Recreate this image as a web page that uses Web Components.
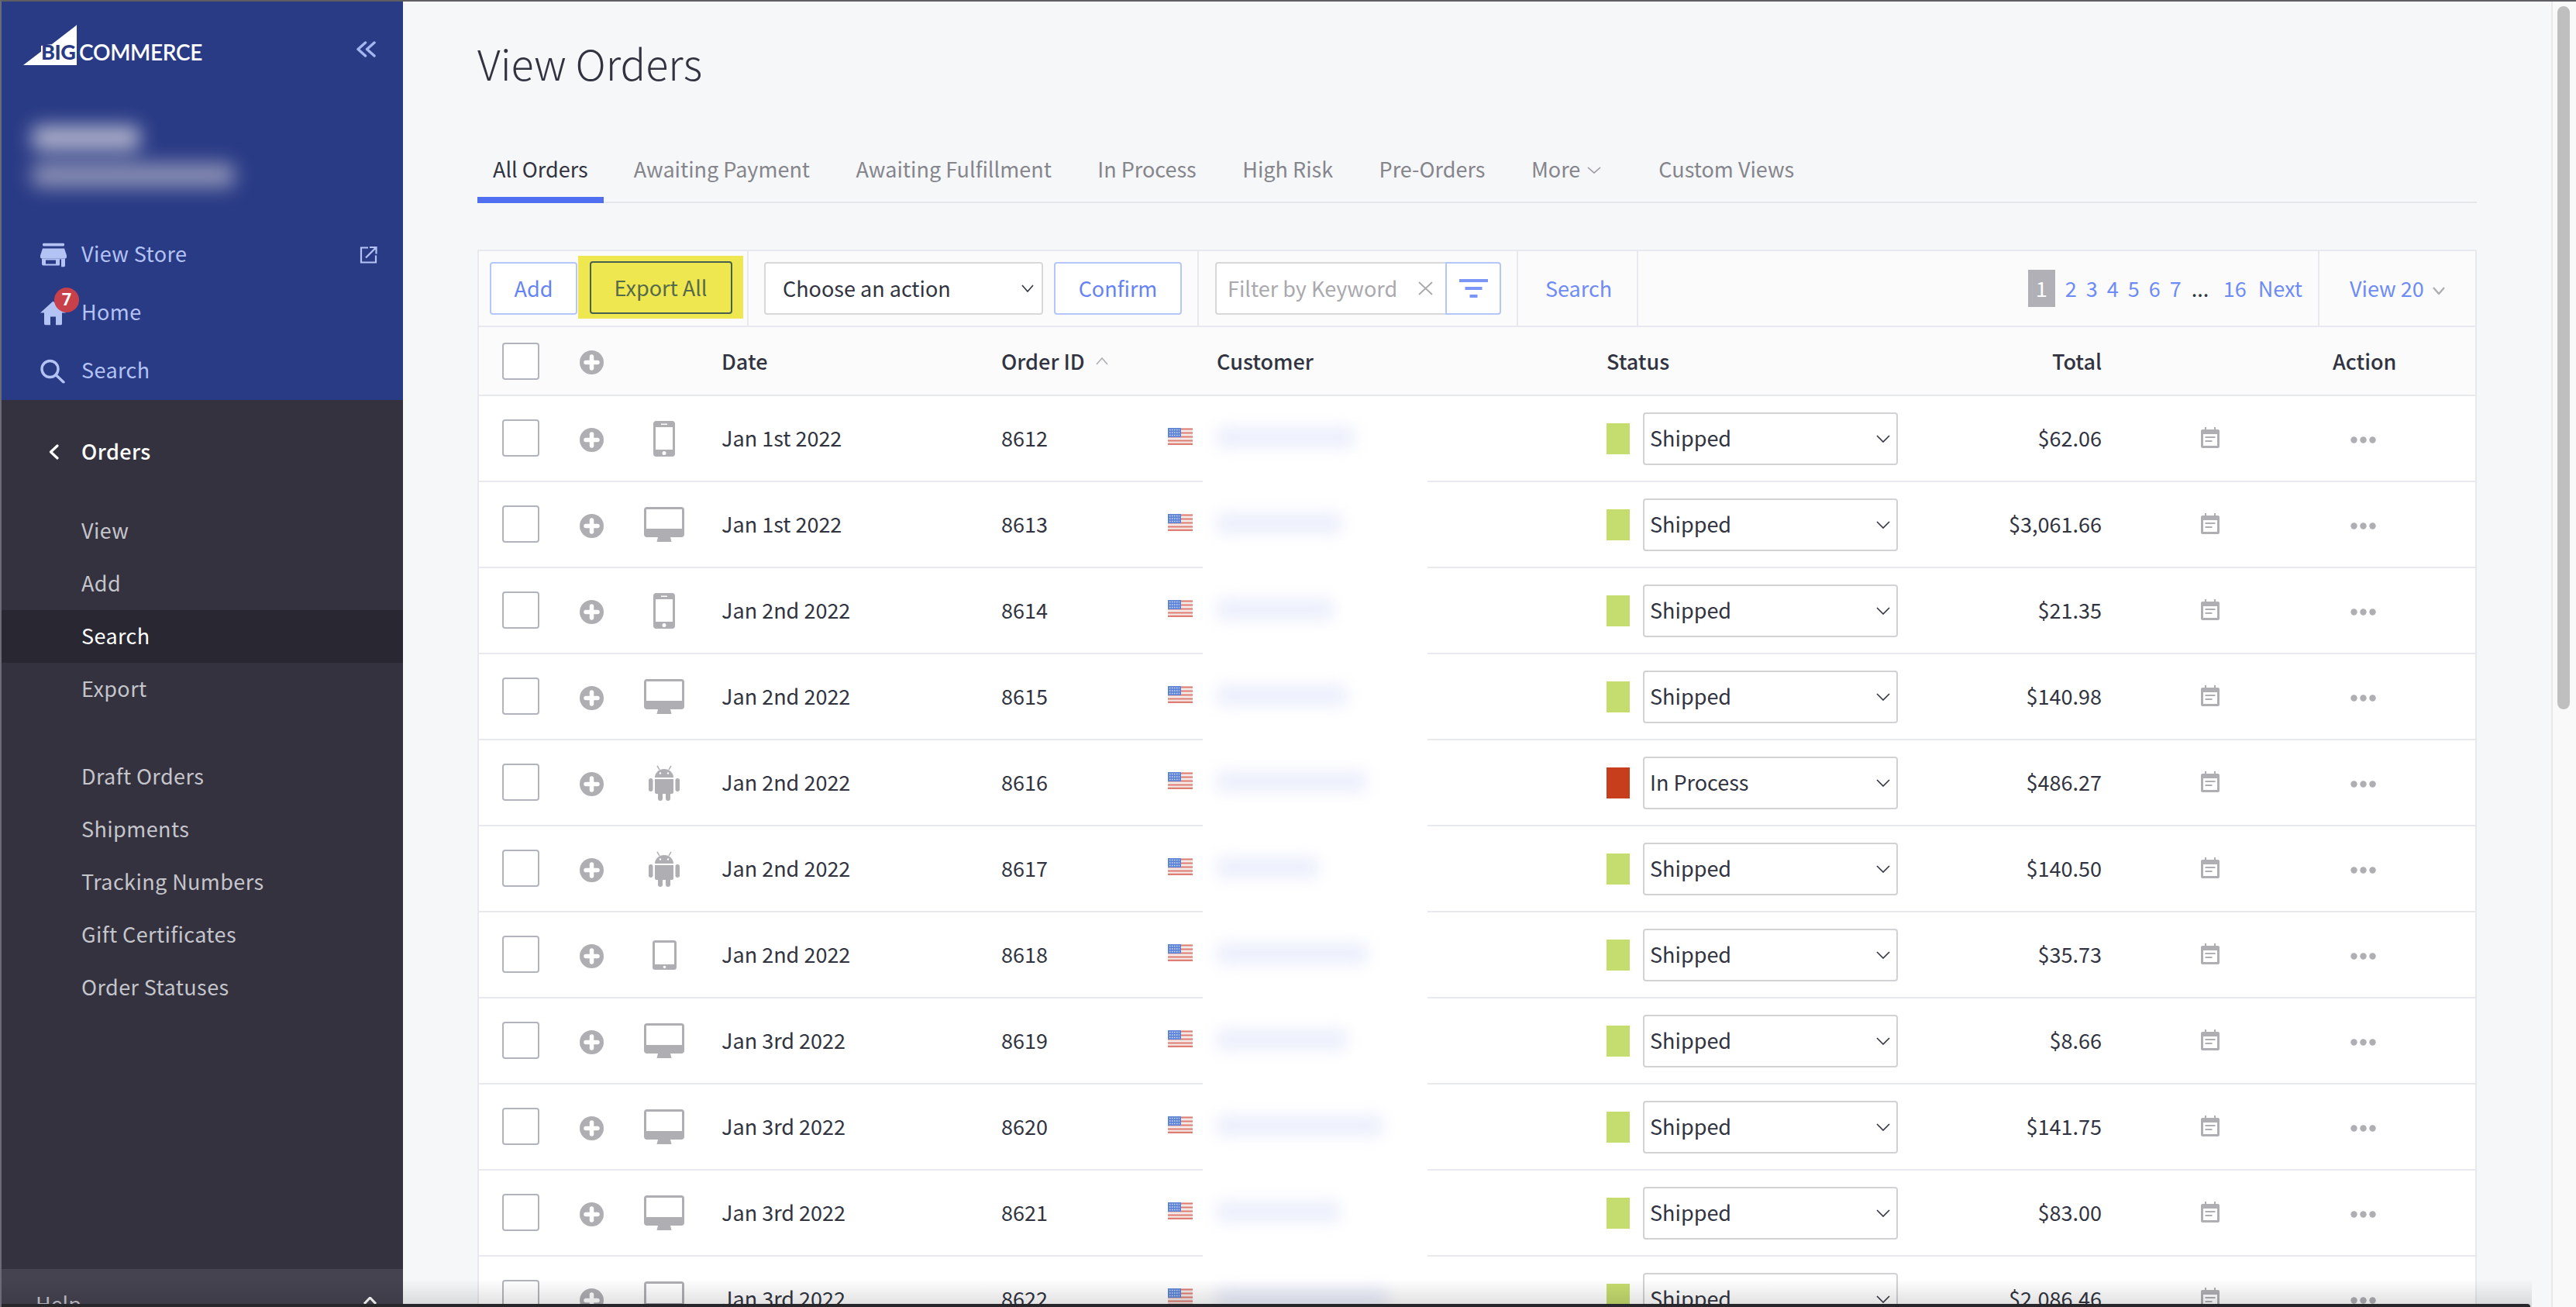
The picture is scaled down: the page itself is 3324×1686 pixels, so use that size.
<!DOCTYPE html>
<html lang="en">
<head>
<meta charset="utf-8">
<title>View Orders</title>
<style>
  html, body { margin: 0; padding: 0; background: #f6f7f9; }
  body { width: 3324px; height: 1686px; overflow: hidden; }
</style>
</head>
<body>
<bc-app></bc-app>
<script>
const FONT = `"Noto Sans CJK JP", "Noto Sans", sans-serif`;
const TEXT_SIZE = "27px";
const GREY = "#aeaeb3";

const ICONS = {
  store: `<svg width="34" height="31" viewBox="0 0 34 31"><rect x="3" width="28" height="4" rx="1.5" fill="currentColor"/><path d="M3 7h28l3 9v2a2 2 0 0 1-2 2H2a2 2 0 0 1-2-2v-2z" fill="currentColor"/><path fill-rule="evenodd" d="M2 20h30v9a2 2 0 0 1-2 2h-2a1 1 0 0 1-1-1V21h-2v7a1 1 0 0 1-1 1H4a2 2 0 0 1-2-2zM7 22v5h13v-5z" fill="currentColor"/></svg>`,
  external: `<svg width="23" height="23" viewBox="0 0 23 23" fill="none" stroke="currentColor" stroke-width="2.2"><path d="M11 2H2v19h19v-9"/><path d="M8 15 21 2M13 1.500h8.500V10"/></svg>`,
  home: `<svg width="33" height="31" viewBox="0 0 33 31"><path d="M16.500 0 33 15h-5v14a2 2 0 0 1-2 2h-6V20h-7v11H7a2 2 0 0 1-2-2V15H0z" fill="currentColor"/></svg>`,
  search: `<svg width="32" height="31" viewBox="0 0 32 31" fill="none" stroke="currentColor" stroke-width="3.400" stroke-linecap="round"><circle cx="12.500" cy="12.500" r="10.500"/><path d="m20 20 10 9.500"/></svg>`,
  phone: `<svg width="28" height="46" viewBox="0 0 28 46"><rect width="28" height="46" rx="4" fill="${GREY}"/><rect x="3" y="8" width="22" height="29" fill="#fff"/><circle cx="14" cy="41.500" r="2.500" fill="#fff"/><rect x="10" y="3.500" width="8" height="1.500" fill="#fff"/></svg>`,
  desktop: `<svg width="52" height="45" viewBox="0 0 52 45"><rect width="52" height="39" rx="4" fill="${GREY}"/><rect x="3" y="3" width="46" height="25" fill="#fff"/><path d="M18 39h16l1.500 6h-19z" fill="${GREY}"/></svg>`,
  tablet: `<svg width="31" height="38" viewBox="0 0 31 38"><rect width="31" height="38" rx="3.500" fill="${GREY}"/><rect x="3" y="3" width="25" height="28" fill="#fff"/><circle cx="15.500" cy="34.500" r="1.800" fill="#fff"/></svg>`,
  android: `<svg width="40" height="46" viewBox="0 0 40 46"><path d="M8 16a12 11 0 0 1 24 0z" fill="${GREY}"/><path d="M11 .8 14 6M29 .8 26 6" stroke="${GREY}" stroke-width="1.500"/><circle cx="15" cy="10.500" r="1.200" fill="#fff"/><circle cx="25" cy="10.500" r="1.200" fill="#fff"/><path d="M8 18h24v17a2 2 0 0 1-2 2H10a2 2 0 0 1-2-2z" fill="${GREY}"/><rect y="17" width="5.500" height="17" rx="2.700" fill="${GREY}"/><rect x="34.500" y="17" width="5.500" height="17" rx="2.700" fill="${GREY}"/><rect x="12" y="33" width="6" height="13" rx="3" fill="${GREY}"/><rect x="22" y="33" width="6" height="13" rx="3" fill="${GREY}"/></svg>`,
  plus: `<svg width="31" height="31" viewBox="0 0 31 31"><circle cx="15.500" cy="15.500" r="15.500" fill="${GREY}"/><path d="M15.500 8v15M8 15.500h15" stroke="#fff" stroke-width="5.500" stroke-linecap="round"/></svg>`,
  note: `<svg width="24" height="27" viewBox="0 0 24 27"><path d="M2 3h3V0h2v3h10V0h2v3h3a2 2 0 0 1 2 2v20a2 2 0 0 1-2 2H2a2 2 0 0 1-2-2V5a2 2 0 0 1 2-2z" fill="${GREY}"/><rect x="3" y="9" width="18" height="15" fill="#fff"/><rect x="5.500" y="12" width="13" height="2" fill="${GREY}"/><rect x="5.500" y="17" width="9" height="2" fill="${GREY}"/></svg>`,
  dots: `<svg width="33" height="9" viewBox="0 0 33 9" fill="${GREY}"><circle cx="4.500" cy="4.500" r="4.200"/><circle cx="16.500" cy="4.500" r="4.200"/><circle cx="28.500" cy="4.500" r="4.200"/></svg>`,
  flag: `<svg width="32" height="22" viewBox="0 0 32 22"><rect width="32" height="22" fill="#f3e9e6"/><path d="M0 1.500h32M0 6.500h32M0 11.500h32M0 16.500h32M0 20.800h32" stroke="#df7d72" stroke-width="2.200"/><rect width="17" height="12" fill="#5d84d6"/><path d="M2 2.500h13M2 6h13M2 9.500h13" stroke="#cfdcf5" stroke-width="1.300" stroke-dasharray="1.500 1.500"/></svg>`,
  funnel: `<svg width="37" height="24" viewBox="0 0 37 24" fill="#7c96f8"><rect width="37" height="4"/><rect x="7.500" y="10" width="22" height="4"/><rect x="13.500" y="20" width="10" height="4"/></svg>`,
};

const chevron = (w, h, color, sw = 2, up = false) =>
  `<svg width="${w}" height="${h}" viewBox="0 0 ${w} ${h}" fill="none" stroke="${color}" stroke-width="${sw}"><path d="${up ? `M1 ${h - 1}L${w / 2} 1L${w - 1} ${h - 1}` : `M1 1L${w / 2} ${h - 1}L${w - 1} 1`}"/></svg>`;

class NavItem extends HTMLElement {
  constructor() {
    super();
    this.attachShadow({ mode: "open" });
  }

  connectedCallback() {
    const icon = this.getAttribute("icon");
    this.shadowRoot.innerHTML = /* html */`
    <style>
      :host { display: flex; align-items: center; height: var(--item-height, 68px); box-sizing: border-box; padding: 0 0 3px 103px; position: relative; color: var(--item-color, #c5c5cc); font: 400 ${TEXT_SIZE}/40px ${FONT}; letter-spacing: .4px; }
      :host([active]) { background: #292731; color: #fff; }
      :host([strong]) { color: #fff; font-weight: 500; }
      .icon { position: absolute; left: 50px; top: 50%; transform: translateY(-50%); display: flex; }
      .end { position: absolute; right: 33px; top: 50%; transform: translateY(-50%); display: flex; }
    </style>
    ${icon ? `<span class="icon">${ICONS[icon]}</span>` : ""}
    <slot></slot>
    <span class="end"><slot name="end"></slot></span>`;
  }
}
customElements.define("nav-item", NavItem);

class BcSidebar extends HTMLElement {
  constructor() {
    super();
    this.attachShadow({ mode: "open" });
  }

  connectedCallback() {
    this.shadowRoot.innerHTML = /* html */`
    <style>
      :host { display: flex; flex-direction: column; width: 518px; height: 1684px; flex: none; overflow: hidden; font-family: ${FONT}; }
      .blue { height: 514px; background: #2a3b86; box-sizing: border-box; padding-top: 30px; flex: none; --item-height: 75px; --item-color: #b3c3f4; }
      .brand { display: flex; justify-content: space-between; padding: 0 35px 0 28px; height: 52px; }
      .logo { position: relative; width: 240px; height: 52px; }
      .logo svg { position: absolute; left: 0; top: 0; }
      .big { position: absolute; left: 23px; top: 22px; font: 900 27px/26px Lato, sans-serif; color: #2a3b86; letter-spacing: -.4px; }
      .commerce { position: absolute; left: 72px; top: 22px; font: 600 28px/26px Lato, sans-serif; color: #fff; letter-spacing: -.3px; }
      .collapse { margin-top: 21px; }
      .account { width: 294px; height: 108px; margin: 66px 0 0 25px; position: relative; filter: blur(12px); }
      .account i { position: absolute; left: 14px; display: block; border-radius: 10px; }
      .account .a { top: 12px; width: 140px; height: 32px; background: #aeb1ca; }
      .account .b { top: 60px; width: 262px; height: 32px; background: #8a8fb3; }
      .nav { margin-top: 33px; }
      .badge { position: absolute; left: 68px; top: 5px; width: 32px; height: 32px; border-radius: 50%; background: #c8414a; color: #fff; font: 700 22px/32px Roboto, sans-serif; text-align: center; }
      .dark { flex: 1; background: #34323f; padding-top: 33px; }
      .back { position: absolute; left: 61px; top: 24px; display: flex; }
      .sub { margin-top: 34px; }
      .sub2 { margin-top: 45px; }
      .help { height: 49px; background: #454350; flex: none; color: #c5c5cc; font-size: ${TEXT_SIZE}; line-height: 40px; padding: 25px 34px 0 44px; box-sizing: border-box; display: flex; justify-content: space-between; }
      .help svg { margin-top: 11px; }
      .rel { position: relative; }
    </style>
    <div class="blue">
      <div class="brand">
        <div class="logo">
          <svg width="70" height="52" viewBox="0 0 70 52"><path d="M0 52 23 34.500V27l14-2L67.500 1.500 69 0v52z" fill="#fff"/></svg>
          <span class="big">BIG</span><span class="commerce">COMMERCE</span>
        </div>
        <span class="collapse"><svg width="25" height="21" viewBox="0 0 25 21" fill="none" stroke="#a3b6f1" stroke-width="3.400" stroke-linecap="round" stroke-linejoin="round"><path d="M11.500 2 2 10.500l9.500 8.500M23 2l-9.500 8.500L23 19"/></svg></span>
      </div>
      <div class="account"><i class="a"></i><i class="b"></i></div>
      <div class="nav">
        <nav-item icon="store">View Store<span slot="end" style="display:flex">${ICONS.external}</span></nav-item>
        <div class="rel"><nav-item icon="home">Home</nav-item><span class="badge">7</span></div>
        <nav-item icon="search">Search</nav-item>
      </div>
    </div>
    <div class="dark">
      <div class="rel">
        <span class="back"><svg width="13" height="20" viewBox="0 0 13 20" fill="none" stroke="#fff" stroke-width="3.200" stroke-linecap="round" stroke-linejoin="round"><path d="M11 2 2.500 10 11 18"/></svg></span>
        <nav-item strong>Orders</nav-item>
      </div>
      <div class="sub">
        <nav-item>View</nav-item>
        <nav-item>Add</nav-item>
        <nav-item active>Search</nav-item>
        <nav-item>Export</nav-item>
      </div>
      <div class="sub2">
        <nav-item>Draft Orders</nav-item>
        <nav-item>Shipments</nav-item>
        <nav-item>Tracking Numbers</nav-item>
        <nav-item>Gift Certificates</nav-item>
        <nav-item>Order Statuses</nav-item>
      </div>
    </div>
    <div class="help"><span>Help</span>${chevron(17, 10, "#fff", 3, true)}</div>`;
  }
}
customElements.define("bc-sidebar", BcSidebar);

class OrderTabs extends HTMLElement {
  constructor() {
    super();
    this.attachShadow({ mode: "open" });
  }

  connectedCallback() {
    const tabs = ["Awaiting Payment", "Awaiting Fulfillment", "In Process", "High Risk", "Pre-Orders"];
    this.shadowRoot.innerHTML = /* html */`
    <style>
      :host { display: flex; height: 64px; box-sizing: border-box; border-bottom: 2px solid #e6e7ea; font: 400 ${TEXT_SIZE}/40px ${FONT}; color: #85858c; }
      .tab { padding: 0 20px; margin-right: 19.500px; height: 64px; box-sizing: border-box; white-space: nowrap; }
      .on { color: #313440; border-bottom: 8px solid #4f6ff0; margin-right: 19px; }
      .more { display: flex; gap: 9px; margin-right: 34px; }
      .more svg { margin-top: 17px; }
    </style>
    <div class="tab on">All Orders</div>
    ${tabs.map((t) => `<div class="tab">${t}</div>`).join("")}
    <div class="tab more">More ${chevron(18, 9, "#97979d", 1.6)}</div>
    <div class="tab">Custom Views</div>`;
  }
}
customElements.define("order-tabs", OrderTabs);

class OrderToolbar extends HTMLElement {
  constructor() {
    super();
    this.attachShadow({ mode: "open" });
  }

  connectedCallback() {
    const pages = ["2", "3", "4", "5", "6", "7"];
    this.shadowRoot.innerHTML = /* html */`
    <style>
      :host { display: flex; height: 98px; box-sizing: border-box; background: #fbfbfc; border-bottom: 2px solid #e8e9ee; font: 400 ${TEXT_SIZE}/40px ${FONT}; color: #313440; }
      .group { display: flex; align-items: center; box-sizing: border-box; border-right: 2px solid #e8e9ee; height: 96px; position: relative; }
      .btn { height: 68px; box-sizing: border-box; border: 2px solid #b4c6fb; border-radius: 4px; background: #fff; color: #6683f5; display: flex; align-items: center; justify-content: center; }
      .actions { width: 348px; padding-left: 14px; }
      .add { width: 113px; }
      .export { position: absolute; left: 128px; top: 6px; width: 213px; height: 81px; background: #efe74f; display: flex; align-items: center; justify-content: center; }
      .export span { width: 184px; height: 68px; box-sizing: border-box; border: 2px solid #47604f; border-radius: 4px; color: #566a4c; display: flex; align-items: center; justify-content: center; }
      .bulk { width: 581px; padding-left: 20px; gap: 14px; }
      .select { width: 360px; height: 68px; box-sizing: border-box; border: 2px solid #d8d8d8; border-radius: 4px; background: #fff; padding: 0 10px 0 22px; display: flex; align-items: center; justify-content: space-between; }
      .confirm { width: 165px; }
      .filter { width: 412px; padding-left: 21px; }
      .keyword { width: 297px; height: 68px; box-sizing: border-box; border: 2px solid #d8d8d8; border-right: 0; border-radius: 4px 0 0 4px; background: #fff; padding: 0 16px 0 14px; display: flex; align-items: center; justify-content: space-between; color: #a9a9ae; }
      .funnel { width: 72px; height: 68px; box-sizing: border-box; border: 2px solid #b4c6fb; border-radius: 0 4px 4px 0; background: #fff; display: flex; align-items: center; justify-content: center; }
      .search { width: 155px; padding-left: 35px; color: #6d8bf7; }
      .pages { flex: 1; justify-content: flex-end; color: #6d8bf7; padding-right: 20px; }
      .cur { width: 35px; height: 48px; background: #b0b0b6; color: #fff; display: flex; align-items: center; justify-content: center; margin-right: 13px; }
      .pages b { font-weight: 400; width: 27px; }
      .pages em { font-style: normal; color: #313440; width: 41px; text-align: left; margin-left: 1px; }
      .pages .next { margin-left: 15px; }
      .view { width: 201px; border-right: 0; padding-left: 39px; color: #6d8bf7; gap: 11px; flex: none; }
      .view svg { margin-top: 5px; }
    </style>
    <div class="group actions">
      <div class="btn add">Add</div>
      <div class="export"><span>Export All</span></div>
    </div>
    <div class="group bulk">
      <div class="select">Choose an action ${chevron(16, 10, "#313440", 1.6)}</div>
      <div class="btn confirm">Confirm</div>
    </div>
    <div class="group filter">
      <div class="keyword">Filter by Keyword <svg width="19" height="18" viewBox="0 0 19 18" stroke="#a9a9ae" stroke-width="1.800"><path d="M1 1l17 16M18 1 1 17"/></svg></div>
      <div class="funnel">${ICONS.funnel}</div>
    </div>
    <div class="group search">Search</div>
    <div class="group pages">
      <span class="cur">1</span>
      ${pages.map((p) => `<b>${p}</b>`).join("")}
      <em>...</em><span>16</span><span class="next">Next</span>
    </div>
    <div class="group view">View 20 ${chevron(16, 10, "#aeaeb3", 2.4)}</div>`;
  }
}
customElements.define("order-toolbar", OrderToolbar);

class CheckBox extends HTMLElement {
  constructor() {
    super();
    this.attachShadow({ mode: "open" });
    this.shadowRoot.innerHTML = `<style>:host { display: block; width: 48px; height: 48px; box-sizing: border-box; border: 2px solid #b2b4bd; border-radius: 4px; background: #fff; }</style>`;
  }
}
customElements.define("check-box", CheckBox);

const GRID = `grid-template-columns: 130px 83px 100px 361px 215px 45px 521px 376px 263px 298px 1fr;`;

class OrderHead extends HTMLElement {
  constructor() {
    super();
    this.attachShadow({ mode: "open" });
  }

  connectedCallback() {
    this.shadowRoot.innerHTML = /* html */`
    <style>
      :host { display: grid; ${GRID} align-items: center; height: 89px; box-sizing: border-box; background: #fbfbfc; border-bottom: 2px solid #e8e9ee; font: 500 ${TEXT_SIZE}/40px ${FONT}; color: #313440; }
      check-box { margin-left: 30px; }
      .ic { display: flex; margin-top: 4px; }
      .sort { display: flex; align-items: center; gap: 14px; }
      .total { justify-self: end; }
    </style>
    <check-box></check-box>
    <span class="ic">${ICONS.plus}</span>
    <span></span>
    <span>Date</span>
    <span class="sort">Order ID ${chevron(16, 10, "#aeaeb3", 1.6, true)}</span>
    <span></span>
    <span style="padding-left:18px">Customer</span>
    <span>Status</span>
    <span class="total">Total</span>
    <span></span>
    <span>Action</span>`;
  }
}
customElements.define("order-head", OrderHead);

class OrderRow extends HTMLElement {
  constructor() {
    super();
    this.attachShadow({ mode: "open" });
  }

  connectedCallback() {
    const a = (n) => this.getAttribute(n);
    this.shadowRoot.innerHTML = /* html */`
    <style>
      :host { display: grid; ${GRID} align-items: center; height: 111px; box-sizing: border-box; background: #fff; border-bottom: 2px solid #e8e9ee; font: 400 ${TEXT_SIZE}/40px ${FONT}; color: #313440; }
      check-box { margin-left: 30px; margin-top: -2px; }
      .t { margin-top: -2px; }
      .ic { display: flex; margin-top: 4px; }
      .device { display: flex; justify-content: center; width: 52px; }
      .flag { display: flex; margin-top: -6px; }
      .customer { align-self: stretch; width: 290px; background: #fff; box-shadow: 0 2px 0 #fff; display: flex; align-items: center; padding-left: 18px; box-sizing: border-box; }
      .blur { height: 26px; background: #ebeefc; filter: blur(10px); border-radius: 6px; margin-top: -4px; }
      .status { display: flex; align-items: center; gap: 17px; }
      .swatch { width: 30px; height: 40px; background: #c5dc6e; }
      .swatch.process { background: #c73e1d; }
      .pick { width: 329px; height: 68px; box-sizing: border-box; border: 2px solid #d2d2d4; border-radius: 4px; background: #fff; padding: 0 8px 0 7px; display: flex; align-items: center; justify-content: space-between; }
      .pick span { margin-top: -2px; }
      .total { justify-self: end; }
      .note { display: flex; padding-left: 128px; margin-top: -2px; }
      .dots { display: flex; padding-left: 23px; margin-top: 4px; }
    </style>
    <check-box></check-box>
    <span class="ic">${ICONS.plus}</span>
    <span class="device">${ICONS[a("device")]}</span>
    <span class="t">${a("date")}</span>
    <span class="t">${a("order")}</span>
    <span class="flag">${ICONS.flag}</span>
    <div class="customer"><div class="blur" style="width:${a("name")}px"></div></div>
    <div class="status">
      <span class="swatch ${a("status") === "In Process" ? "process" : ""}"></span>
      <div class="pick"><span>${a("status")}</span> ${chevron(18, 10, "#313440", 1.6)}</div>
    </div>
    <span class="total t">${a("total")}</span>
    <span class="note">${ICONS.note}</span>
    <span class="dots">${ICONS.dots}</span>`;
  }
}
customElements.define("order-row", OrderRow);

class BcApp extends HTMLElement {
  constructor() {
    super();
    this.attachShadow({ mode: "open" });
  }

  connectedCallback() {
    const orders = [
      ["8612", "Jan 1st 2022", "phone", "Shipped", "$62.06", 178],
      ["8613", "Jan 1st 2022", "desktop", "Shipped", "$3,061.66", 161],
      ["8614", "Jan 2nd 2022", "phone", "Shipped", "$21.35", 151],
      ["8615", "Jan 2nd 2022", "desktop", "Shipped", "$140.98", 168],
      ["8616", "Jan 2nd 2022", "android", "In Process", "$486.27", 193],
      ["8617", "Jan 2nd 2022", "android", "Shipped", "$140.50", 131],
      ["8618", "Jan 2nd 2022", "tablet", "Shipped", "$35.73", 195],
      ["8619", "Jan 3rd 2022", "desktop", "Shipped", "$8.66", 168],
      ["8620", "Jan 3rd 2022", "desktop", "Shipped", "$141.75", 214],
      ["8621", "Jan 3rd 2022", "desktop", "Shipped", "$83.00", 159],
      ["8622", "Jan 3rd 2022", "desktop", "Shipped", "$2,086.46", 220],
    ];
    this.shadowRoot.innerHTML = /* html */`
    <style>
      :host { display: block; position: relative; width: 3324px; height: 1686px; overflow: hidden; background: #f6f7f9; box-sizing: border-box; border-top: 2px solid #5f5f63; border-left: 2px solid #6b6b78; }
      .shell { display: flex; height: 1684px; }
      .main { width: 2774px; height: 1684px; box-sizing: border-box; padding: 0 96px; overflow: hidden; flex: none; border-right: 2px solid #e8e8e8; }
      h1 { margin: 0; font: 300 54px/76px ${FONT}; color: #313440; padding-top: 41px; height: 136px; box-sizing: border-box; }
      order-tabs { margin-top: 60px; }
      .panel { margin-top: 60px; border: 2px solid #e8e9ee; border-bottom: 0; }
      .track { flex: 1; background: #f9f9f9; position: relative; }
      .thumb { position: absolute; left: 6px; top: 6px; width: 16px; height: 907px; border-radius: 8px; background: #bfbfbf; }
      .shade { position: absolute; left: 0; bottom: 0; width: 3265px; height: 36px; background: linear-gradient(rgba(0,0,0,0), rgba(0,0,0,.13)); }
      .bar { position: absolute; left: -2px; bottom: 0; width: 3265px; height: 4px; background: #26262b; border-radius: 0 6px 0 0; }
    </style>
    <div class="shell">
      <bc-sidebar></bc-sidebar>
      <div class="main">
        <h1>View Orders</h1>
        <order-tabs></order-tabs>
        <div class="panel">
          <order-toolbar></order-toolbar>
          <order-head></order-head>
          ${orders.map(([order, date, device, status, total, name]) => `<order-row order="${order}" date="${date}" device="${device}" status="${status}" total="${total}" name="${name}"></order-row>`).join("")}
        </div>
      </div>
      <div class="track"><div class="thumb"></div></div>
    </div>
    <div class="shade"></div>
    <div class="bar"></div>`;
  }
}
customElements.define("bc-app", BcApp);
</script>
</body>
</html>
